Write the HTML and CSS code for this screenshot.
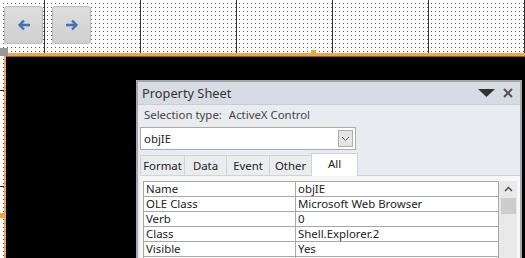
FILE: index.html
```html
<!DOCTYPE html>
<html lang="en">
<head>
    <meta charset="UTF-8">
    <title>Form Design - objIE</title>
    <link rel="stylesheet" href="styles.css">
</head>
<body>
    <div class="toolbar">
        <button class="nav-btn" title="Back">
            <svg width="14" height="12" viewBox="0 0 14 12"><path d="M13 6H3M7 1.5L2.5 6L7 10.5" fill="none" stroke="#3d72b4" stroke-width="2.4"/></svg>
        </button>
        <button class="nav-btn" title="Forward">
            <svg width="14" height="12" viewBox="0 0 14 12"><path d="M1 6H11M7 1.5L11.5 6L7 10.5" fill="none" stroke="#3d72b4" stroke-width="2.4"/></svg>
        </button>
    </div>

    <div class="design">
        <div class="ruler"></div>
        <div class="detail">
            <div class="prop-sheet">
                <div class="prop-title">
                    <span>Property Sheet</span>
                    <span class="title-icons">
                        <svg width="17" height="8" viewBox="0 0 17 8"><path d="M0 0H17L8.5 8Z" fill="#333"/></svg>
                        <svg width="10" height="10" viewBox="0 0 10 10"><path d="M1 1L9 9M9 1L1 9" stroke="#555" stroke-width="2"/></svg>
                    </span>
                </div>
                <div class="prop-body">
                    <div class="sel-type"><span>Selection type:</span><span>ActiveX Control</span></div>
                    <div class="combo">
                        <span>objIE</span>
                        <span class="combo-btn">
                            <svg width="9" height="6" viewBox="0 0 9 6"><path d="M1 1L4.5 4.5L8 1" fill="none" stroke="#666" stroke-width="1"/></svg>
                        </span>
                    </div>
                    <div class="tabs">
                        <div class="tab">Format</div>
                        <div class="tab">Data</div>
                        <div class="tab">Event</div>
                        <div class="tab">Other</div>
                        <div class="tab active">All</div>
                    </div>
                    <div class="tab-pane">
                        <table class="grid">
                            <tr><td>Name</td><td>objIE</td></tr>
                            <tr><td>OLE Class</td><td>Microsoft Web Browser</td></tr>
                            <tr><td>Verb</td><td>0</td></tr>
                            <tr><td>Class</td><td>Shell.Explorer.2</td></tr>
                            <tr><td>Visible</td><td>Yes</td></tr>
                            <tr><td>&nbsp;</td><td></td></tr>
                        </table>
                        <div class="scrollbar">
                            <svg width="9" height="6" viewBox="0 0 9 6"><path d="M1 5L4.5 1.5L8 5" fill="none" stroke="#444" stroke-width="1.4"/></svg>
                            <div class="thumb"></div>
                        </div>
                    </div>
                </div>
            </div>
        </div>
        <span class="handle handle-corner"></span>
        <span class="handle handle-top"></span>
        <span class="handle handle-left"></span>
    </div>
</body>
</html>
```

FILE: styles.css
```css
body {
    margin: 0;
    width: 525px;
    height: 258px;
    overflow: hidden;
    font-family: "Noto Sans", "Open Sans", sans-serif;
    font-size: 11.4px;
    color: #222;
    background: #fff;
}
.toolbar {
    height: 53px;
    box-sizing: border-box;
    padding: 6px 0 0 4px;
    display: flex;
    gap: 9px;
    align-items: flex-start;
    background-color: #fff;
    background-image:
        linear-gradient(90deg, transparent 44px, #333 44px, #333 45px, transparent 45px),
        linear-gradient(90deg, #fff 3px, transparent 3px),
        linear-gradient(#fff 3px, #5a5a5a 3px);
    background-size: 96px 100%, 4px 4px, 4px 4px;
    background-repeat: repeat-x, repeat, repeat;
}
.nav-btn {
    width: 39px;
    height: 38px;
    border: 1px solid #bdbdbd;
    border-radius: 3px;
    background: linear-gradient(#dedede, #cfcfcf);
    padding: 0;
    display: flex;
    align-items: center;
    justify-content: center;
}
.design {
    position: relative;
    display: flex;
    height: 205px;
}
.ruler {
    width: 4px;
    margin-top: 3px;
    background-color: #fff;
    background-image:
        linear-gradient(transparent 34px, #222 34px, #222 35px, transparent 35px),
        linear-gradient(90deg, #fff 3px, transparent 3px),
        linear-gradient(#fff 3px, #5a5a5a 3px);
    background-size: 100% 96px, 4px 4px, 4px 4px;
}
.detail {
    flex: 1;
    background: #000;
    border-top: 3px solid #f3a640;
    border-left: 2px solid #f3a640;
    box-shadow: inset 0 1px 0 #9a5a10;
    overflow: hidden;
}
.handle {
    position: absolute;
}
.handle-corner {
    left: 0;
    top: -5px;
    width: 8px;
    height: 8px;
    background: #999;
}
.handle-top {
    left: 311px;
    top: -3px;
    width: 5px;
    height: 3px;
    background: #f3a640;
}
.handle-left {
    left: 0;
    top: 160px;
    width: 4px;
    height: 5px;
    background: #f3a640;
}
.prop-sheet {
    margin: 24px 0 0 130px;
    width: 386px;
    height: 180px;
    box-sizing: border-box;
    border: 2px solid #a3a8ae;
    border-bottom: none;
    background: #e8ebef;
}
.prop-title {
    height: 22px;
    display: flex;
    align-items: center;
    justify-content: space-between;
    padding: 0 7px 0 4px;
    background: #d7dce2;
    border-bottom: 1px solid #c9ced5;
    font-size: 12.8px;
    color: #333;
}
.title-icons {
    display: flex;
    align-items: center;
    gap: 8px;
}
.prop-body {
    padding: 0 0 0 2px;
}
.sel-type {
    display: flex;
    gap: 7px;
    padding: 2px 0 0 4px;
    height: 20px;
    box-sizing: border-box;
    margin-bottom: 2px;
    color: #444;
}
.combo {
    width: 216px;
    height: 23px;
    box-sizing: border-box;
    border: 1px solid #aaa;
    background: #fff;
    display: flex;
    align-items: center;
    justify-content: space-between;
    padding: 0 2px 0 3px;
}
.combo-btn {
    width: 15px;
    height: 17px;
    box-sizing: border-box;
    border: 1px solid #adadad;
    background: #e4e4e4;
    display: flex;
    align-items: center;
    justify-content: center;
}
.tabs {
    display: flex;
    align-items: flex-end;
    margin-top: 3px;
    height: 22px;
}
.tab {
    height: 20px;
    box-sizing: border-box;
    padding: 0 4px;
    border: 1px solid #cfd2d6;
    border-right: none;
    border-bottom: none;
    background: #ebecee;
    display: flex;
    align-items: center;
    justify-content: center;
}
.tab:nth-child(1) { width: 44px; }
.tab:nth-child(2) { width: 42px; }
.tab:nth-child(3) { width: 43px; }
.tab:nth-child(4) { width: 42px; }
.tab.active {
    width: 47px;
    height: 23px;
    margin-bottom: -1px;
    background: #fff;
    border-right: 1px solid #cfd2d6;
    align-items: flex-start;
    padding-top: 2px;
    position: relative;
}
.tab-pane {
    display: flex;
    align-items: flex-start;
    padding: 5px 2px 0 3px;
    border-top: 1px solid #cfd2d6;
    background: #f7f7f7;
    height: 80px;
}
.grid {
    width: 356px;
    border-collapse: collapse;
    background: #fff;
}
.grid td {
    height: 14px;
    padding: 0 0 0 2px;
    border: 1px solid #a8a8a8;
    line-height: 14px;
    white-space: nowrap;
}
.grid td:first-child {
    width: 149px;
}
.scrollbar {
    width: 18px;
    height: 80px;
    background: #e9e9e9;
    display: flex;
    flex-direction: column;
    align-items: center;
    padding-top: 5px;
    box-sizing: border-box;
}
.thumb {
    width: 15px;
    height: 16px;
    margin-top: 6px;
    background: #cdcdcd;
}
```
